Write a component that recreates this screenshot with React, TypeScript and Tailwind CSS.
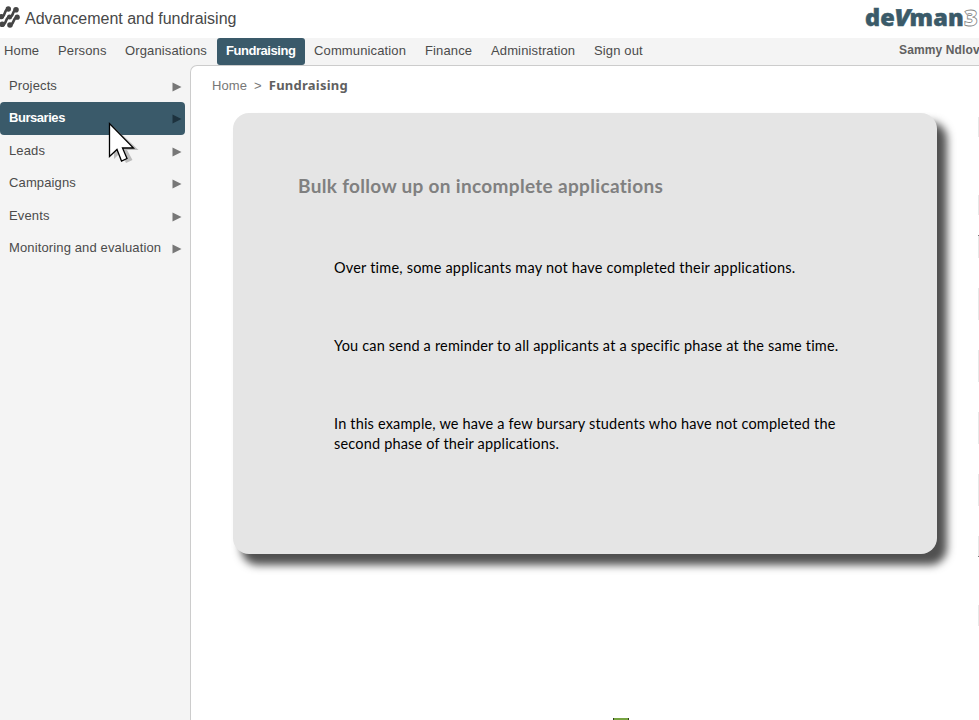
const navItems = [
  { label: 'Home', cell: 'w-[54px]' },
  { label: 'Persons', cell: 'w-[67px]' },
  { label: 'Organisations', cell: 'w-[92px]' },
  { label: 'Fundraising', cell: 'w-[88px]', active: true },
  { label: 'Communication', cell: 'w-[120px] pl-[9px]' },
  { label: 'Finance', cell: 'w-[66px]' },
  { label: 'Administration', cell: 'w-[103px]' },
  { label: 'Sign out', cell: 'w-[70px]' },
];

const sideItems = [
  { label: 'Projects', height: 'h-[32px]', active: false },
  { label: 'Bursaries', height: 'h-[33px]', active: true },
  { label: 'Leads', height: 'h-[32px]', active: false },
  { label: 'Campaigns', height: 'h-[33px]', active: false },
  { label: 'Events', height: 'h-[32px]', active: false },
  { label: 'Monitoring and evaluation', height: 'h-[33px]', active: false },
];

function Mark() {
  return (
    <svg width="20" height="30" viewBox="0 0 20 30" className="shrink-0" fill="#454545">
      <path
        d="M-1 17H1.5C5.5 17 4 9 8.3 9M1 24.8H2.5C7 24.8 5 17 9.5 17S12 10 16 10M10 25C14 25 13 17 17.5 17"
        fill="none"
        stroke="#454545"
        strokeWidth="2.6"
      />
      <circle cx="8.3" cy="9" r="2.7" />
      <circle cx="16" cy="9.8" r="2.8" />
      <circle cx="1.5" cy="16.6" r="2.6" />
      <circle cx="9.5" cy="17" r="2.5" />
      <circle cx="17.2" cy="17.2" r="2.6" />
      <circle cx="2.3" cy="24.3" r="2.8" />
      <circle cx="10" cy="25" r="2.8" />
    </svg>
  );
}

function Header() {
  return (
    <header className="flex h-[38px] shrink-0 justify-between overflow-hidden bg-white">
      <div className="flex items-start">
        <Mark />
        <h1 className="ml-[5px] pt-[7px] text-[16px] leading-6 tracking-[-0.01px] text-[#484848]">Advancement and fundraising</h1>
      </div>
      <div className="flex w-[114px] shrink-0 pt-[1px] font-['Open_Sans',sans-serif] text-[23.5px] leading-8 font-extrabold tracking-[0.2px] whitespace-nowrap text-[#3a5a69] [-webkit-text-stroke:0.5px_#3a5a69]">
        <span>de</span>
        <span className="-mr-px -ml-px -skew-x-12">V</span>
        <span>man</span>
        <span className="text-white [-webkit-text-stroke:0.8px_#888]">3</span>
      </div>
    </header>
  );
}

function Cursor() {
  return (
    <svg width="34" height="46" viewBox="0 0 34 46" className="absolute top-[53px] left-[107px]">
      <path d="M7 9V41L14 34L19 45L25.5 42L20 32H31.5Z" fill="#777" fillOpacity=".45" />
      <path d="M2.5 5.5V38.5L10 31.5L14.5 43L20 40.5L15.5 30H26.5Z" fill="#fff" stroke="#000" strokeWidth="1.3" />
    </svg>
  );
}

function Sidebar() {
  return (
    <aside className="relative w-[190px] shrink-0 pt-[5px]">
      {sideItems.map((item) => (
        <div
          key={item.label}
          className={`${item.height} flex w-[185px] justify-between rounded-[4px] pt-[6px] pr-[3px] pl-[9px] leading-5 ${
            item.active ? 'bg-[#3a5a6a] font-bold tracking-[-0.45px] text-white' : ''
          }`}
        >
          <span>{item.label}</span>
          <svg width="10" height="10" viewBox="0 0 10 10" className="mt-[6px]">
            <path d="M.5 .5L9.5 5L.5 9.5Z" fill={item.active ? '#1d323e' : '#777'} />
          </svg>
        </div>
      ))}
      <Cursor />
    </aside>
  );
}

const edgeMarks = [
  'mt-[51px] h-[20px]',
  'mt-[58px] h-[20px]',
  'mt-[20px] h-[23px] border-t border-[#777]',
  'mt-[30px] h-[32px]',
  'mt-[30px] h-[32px]',
  'mt-[30px] h-[32px]',
  'mt-[30px] h-[32px]',
  'mt-[30px] h-[21px] border-b border-[#777]',
  'mt-[48px] h-[21px]',
];

function Main() {
  return (
    <main className="flex min-w-0 flex-1 rounded-tl-[7px] border-t border-l border-[#ccc] bg-white">
      <div className="flex w-[787px] shrink-0 flex-col">
        <div className="flex h-[47px] pt-[10px] pl-[21px] leading-5 text-[#777]">
          <span className="tracking-[0.1px]">Home</span>
          <span className="ml-[7px]">&gt;</span>
          <span className="-mt-px ml-[7px] font-['Noto_Sans',sans-serif] font-bold tracking-[0.23px] text-[#606060]">Fundraising</span>
        </div>
        <section className="ml-[42px] h-[441px] w-[704px] rounded-[16px] bg-[#e5e5e5] pt-[60px] font-[Lato,sans-serif] text-[14.5px] leading-5 tracking-[0.18px] whitespace-nowrap text-black shadow-[9px_10px_8px_1px_#505050]">
          <h2 className="ml-[65px] text-[19px] leading-[26px] font-bold tracking-[0.32px] text-[#808080]">
            Bulk follow up on incomplete applications
          </h2>
          <p className="mt-[59px] ml-[101px] tracking-[0.2px]">Over time, some applicants may not have completed their applications.</p>
          <p className="mt-[58px] ml-[101px]">You can send a reminder to all applicants at a specific phase at the same time.</p>
          <p className="mt-[58px] ml-[101px]">
            In this example, we have a few bursary students who have not completed the
            <br />
            second phase of their applications.
          </p>
        </section>
        <div className="mt-auto flex h-[2px] pl-[422px]">
          <span className="w-[16px] border-x border-[#33451f] bg-[#76a340]" />
        </div>
      </div>
      <div className="flex flex-1 flex-col">
        {edgeMarks.map((mark, i) => (
          <span key={i} className={`${mark} shrink-0 bg-[#e8e8e8]`} />
        ))}
      </div>
    </main>
  );
}

export default function App() {
  return (
    <div className="flex h-[720px] w-[979px] flex-col overflow-hidden bg-[#f4f4f4] font-['Liberation_Sans',Arial,sans-serif] text-[13px] tracking-[0.13px] text-[#4b4b4b]">
      <Header />
      <nav className="flex h-[27px] shrink-0 pl-[4px] leading-5 whitespace-nowrap">
        {navItems.map((item) => (
          <div
            key={item.label}
            className={`${item.cell} shrink-0 pt-[3px] ${
              item.active ? 'rounded-[3px] bg-[#3a5a6a] pl-[9px] font-bold tracking-[-0.45px] text-white' : ''
            }`}
          >
            {item.label}
          </div>
        ))}
        <div className="ml-auto w-[80px] shrink-0 pt-[2px] text-[12px] font-bold text-[#606060]">Sammy Ndlovu</div>
      </nav>
      <div className="flex min-h-0 flex-1">
        <Sidebar />
        <Main />
      </div>
    </div>
  );
}
